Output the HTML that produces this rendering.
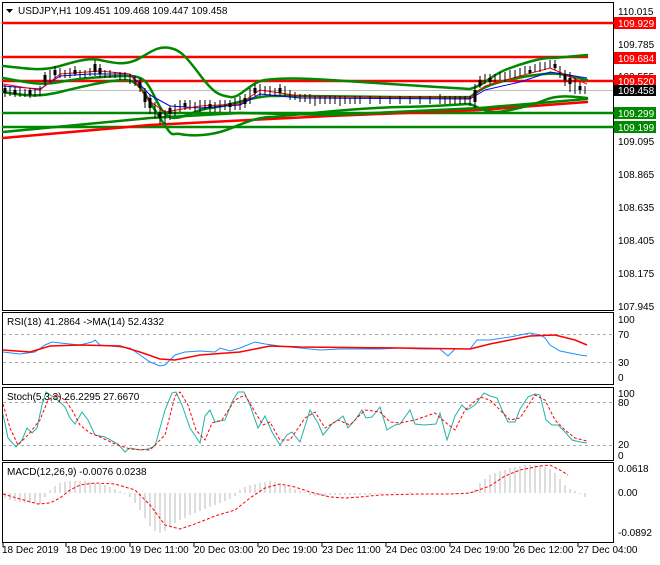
<!DOCTYPE html>
<html><head><style>
body{margin:0;background:#fff;width:660px;height:560px;overflow:hidden;font-family:"Liberation Sans",sans-serif}
svg text{font-family:"Liberation Sans",sans-serif;font-size:10px}
</style></head><body>
<svg width="660" height="560" viewBox="0 0 660 560" xmlns="http://www.w3.org/2000/svg">
<rect width="660" height="560" fill="#fff"/>
<g fill="none" stroke="#000" stroke-width="1">
<rect x="2.5" y="2.5" width="611" height="308"/>
<rect x="2.5" y="312.5" width="611" height="72"/>
<rect x="2.5" y="387.5" width="611" height="73"/>
<rect x="2.5" y="462.5" width="611" height="80"/>
</g>
<line x1="3" y1="90.5" x2="613" y2="90.5" stroke="#c0c0c0"/>
<g stroke-width="2.5" fill="none" stroke-linejoin="round" stroke-linecap="round">
<line x1="3" y1="23" x2="613" y2="23" stroke="#f00"/>
<line x1="3" y1="57" x2="587" y2="57" stroke="#f00"/>
<line x1="3" y1="81" x2="613" y2="81" stroke="#f00"/>
<line x1="3" y1="113" x2="613" y2="113" stroke="#080"/>
<line x1="3" y1="127" x2="613" y2="127" stroke="#080"/>
<polyline stroke="#f00" points="3,138 150,125 330,116 480,110 587,102"/>
<polyline stroke="#080" points="3,132 150,118 240,113 330,115 480,108 587,99"/>
<path stroke="#080" d="M3,66 C25,68 40,72 60,66 S90,58 100,60 S125,67 140,58 S160,46 170,48 S185,55 200,75 S220,95 230,97 S250,82 265,80 S300,78 330,80 S420,86 470,89 C485,85 490,76 505,70 S540,58 550,58 S575,56 587,55"/>
<path stroke="#080" d="M3,92 C25,96 40,97 60,92 S110,80 125,80 S145,95 160,118 S170,132 180,134 S205,136 220,132 S250,118 270,117 S350,108 400,107 S460,104 470,104 C480,108 485,112 495,112 S530,106 545,100 S575,97 587,98"/>
<path stroke="#080" d="M3,78 C25,82 40,86 60,82 S110,76 130,76 S150,92 162,110 S190,110 210,108 S250,97 270,96 S400,98 470,97 C480,90 485,86 500,82 S545,72 560,74 S580,79 587,80"/>
</g>
<polyline fill="none" stroke="#00f" stroke-linejoin="round" points="3,86 40,89 60,76 90,74 130,74 150,95 170,106 200,108 240,105 260,94 300,98 470,99 485,90 520,82 550,72 587,78"/>
<polyline fill="none" stroke="#f00" stroke-linejoin="round" points="3,84 40,90 60,74 100,71 130,74 148,100 165,112 200,106 240,104 260,90 300,96 470,98 485,86 520,76 550,68 587,84"/>
<g stroke="#000" stroke-width="1">
<path d="M5,85v12M10,86v10M15,87v10M20,88v9M25,89v8M30,88v10M35,89v8M40,86v10M45,72v14M50,70v12M55,66v12M60,68v10M65,70v8M70,68v10M75,66v10M80,70v8M85,70v8M90,68v8M95,60v16M100,64v14M105,70v8M110,70v8M115,72v6M120,72v8M125,72v8M130,74v10M135,76v10M140,78v14M145,88v20M150,94v20M155,102v16M160,108v16M165,110v14M170,106v14M175,104v12M180,100v12M185,100v10M190,100v10M195,102v10M200,100v12M205,100v10M210,100v12M215,102v10M220,100v12M225,100v10M230,100v12M235,98v12M240,96v14M245,94v14M250,88v16M255,84v12M260,84v12M265,86v8M270,86v10M275,88v8M280,84v12M285,86v10M290,90v10M295,92v8M300,94v8M305,94v8M310,94v10M315,96v10M320,96v8M325,96v8M330,96v8M335,96v8M340,96v10M345,96v8M350,98v6M355,96v8M360,96v8M370,96v8M380,96v8M390,96v8M400,96v8M410,96v8M420,96v8M430,96v8M440,94v10M445,96v8M450,96v8M455,96v8M460,96v8M465,96v8M470,96v10M475,84v24M480,76v12M485,74v10M490,74v10M495,74v8M500,72v8M505,72v10M510,70v8M515,70v8M520,68v8M525,66v8M530,66v8M535,64v8M540,62v10M545,62v8M550,60v8M555,60v10M560,66v12M565,70v16M570,72v20M575,78v16M580,82v12M585,86v8"/>
</g>
<g stroke="#000" stroke-width="3">
<path d="M5,88v5M15,90v4M30,90v5M45,75v7M55,70v5M75,70v4M95,64v8M100,68v6M140,82v6M145,92v10M150,98v10M160,112v6M170,108v6M185,103v4M210,104v4M230,103v4M245,98v6M255,88v5M280,88v5M475,90v12M480,80v6M490,78v4M530,70v3M555,64v4M565,74v6M570,78v6M580,86v4"/>
</g>
<g font-size="10" fill="#000">
<text x="618" y="15">110.015</text>
<text x="618" y="48">109.785</text>
<text x="618" y="80">109.555</text>
<text x="618" y="145">109.095</text>
<text x="618" y="178">108.865</text>
<text x="618" y="211">108.635</text>
<text x="618" y="244">108.405</text>
<text x="618" y="277">108.175</text>
<text x="618" y="310">107.945</text>
</g>
<rect x="614" y="17" width="42" height="12" fill="#f00"/><text x="618" y="27" fill="#fff">109.929</text>
<rect x="614" y="52" width="42" height="12" fill="#f00"/><text x="618" y="62" fill="#fff">109.684</text>
<rect x="614" y="75" width="42" height="12" fill="#f00"/><text x="618" y="85" fill="#fff">109.520</text>
<rect x="614" y="85" width="42" height="11" fill="#000"/><text x="618" y="94" fill="#fff">109.458</text>
<rect x="614" y="107" width="42" height="12" fill="#080"/><text x="618" y="117" fill="#fff">109.299</text>
<rect x="614" y="121" width="42" height="12" fill="#080"/><text x="618" y="131" fill="#fff">109.199</text>
<path d="M6,9h7l-3.5,4z" fill="#000"/>
<text x="18" y="14" fill="#000">USDJPY,H1  109.451 109.468 109.447 109.458</text>
<g stroke="#aaa" stroke-dasharray="3,3"><line x1="3" y1="334.5" x2="613" y2="334.5"/><line x1="3" y1="362.5" x2="613" y2="362.5"/></g>
<polyline fill="none" stroke="#1e90ff" points="3,352 20,354 35,352 45,345 52,342 60,343 80,345 92,342 95,340 100,345 130,348 140,355 150,362 160,366 165,365 175,355 185,352 200,351 215,352 220,348 230,351 240,348 255,342 265,344 280,346 300,348 320,350 340,349 360,349 380,349 400,348 420,349 440,349 448,356 455,349 470,349 477,340 490,340 510,337 525,334 530,333 540,335 545,338 550,345 560,351 570,353 580,355 587,356"/>
<polyline fill="none" stroke="#f00" stroke-width="1.5" points="3,350 30,352 50,346 80,345 120,346 140,352 160,359 175,360 200,355 240,352 270,346 300,347 400,348 470,349 490,344 530,336 555,335 575,340 587,345"/>
<g font-size="9.5"><text x="618" y="323">100</text><text x="618" y="338">70</text><text x="618" y="366">30</text><text x="618" y="381">0</text></g>
<text x="7" y="325">RSI(18) 41.2864  -&gt;MA(14) 52.4332</text>
<g stroke="#aaa" stroke-dasharray="3,3"><line x1="3" y1="402.5" x2="613" y2="402.5"/><line x1="3" y1="445.5" x2="613" y2="445.5"/></g>
<polyline fill="none" stroke="#20b2aa" points="3,414 8,438 16,447 22,440 27,428 32,433 37,428 42,405 46,392 50,395 55,398 60,402 65,407 70,418 75,424 82,412 88,420 95,435 105,437 118,444 125,452 130,448 140,450 148,449 155,446 165,410 172,393 176,392 182,405 190,428 200,443 205,416 210,410 215,422 225,420 233,400 238,392 244,392 250,405 258,428 265,416 272,432 280,445 287,435 292,432 300,442 310,410 318,423 323,435 332,424 338,420 343,416 348,428 355,420 362,410 366,418 372,417 380,407 387,430 395,425 400,424 410,410 415,424 424,425 436,424 440,413 447,440 455,416 462,405 467,410 475,405 484,393 490,396 497,398 502,410 508,422 515,422 520,409 528,397 535,394 540,395 546,420 552,425 558,425 566,433 572,440 580,442 587,443"/>
<polyline fill="none" stroke="#f00" stroke-dasharray="3,2" points="3,404 10,428 18,445 28,435 40,420 48,400 56,395 65,400 72,410 80,425 90,433 100,437 115,444 130,449 150,450 165,435 175,396 180,392 188,405 196,430 205,440 212,423 222,420 235,400 245,395 255,412 263,425 270,422 280,440 290,440 305,418 315,412 325,428 338,420 350,425 365,410 380,412 390,422 400,423 415,420 435,413 445,422 455,430 465,410 480,397 490,400 500,410 510,420 520,418 535,395 545,400 555,420 565,430 575,438 587,441"/>
<g font-size="9.5"><text x="618" y="397">100</text><text x="618" y="406">80</text><text x="618" y="448">20</text><text x="618" y="459">0</text></g>
<text x="7" y="400">Stoch(5,3,3) 26.2295 27.6670</text>
<path stroke="#bbb" stroke-width="1" d="M5,493v5M10,493v7M15,493v8M20,493v9M25,493v10M30,493v10M35,493v10M40,493v11M45,493v4M50,493v-3M55,493v-7M60,493v-10M65,493v-11M70,493v-12M75,493v-12M80,493v-12M85,493v-12M90,493v-11M95,493v-10M100,493v-9M105,493v-8M110,493v-6M115,493v-4M120,493v-2M125,493v1M130,493v4M135,493v10M140,493v17M145,493v25M150,493v33M155,493v38M160,493v40M165,493v38M170,493v34M175,493v30M180,493v27M185,493v25M190,493v22M195,493v20M200,493v18M205,493v16M210,493v14M215,493v12M220,493v10M225,493v8M230,493v6M235,493v3M240,493v-3M245,493v-6M250,493v-8M255,493v-9M260,493v-10M265,493v-11M270,493v-12M275,493v-11M280,493v-9M285,493v-7M290,493v-5M295,493v-4M300,493v-2M305,493v-1M310,493v2M315,493v3M320,493v3M325,493v3M330,493v2M335,493v2M340,493v2M345,493v2M350,493v2M355,493v2M360,493v2M365,493v2M370,493v2M375,493v1M380,493v1M395,493v-1M410,493v-1M455,493v1M470,493v-1M475,493v-4M480,493v-10M485,493v-14M490,493v-18M495,493v-20M500,493v-22M505,493v-23M510,493v-25M515,493v-26M520,493v-27M525,493v-28M530,493v-28M535,493v-28M540,493v-28M545,493v-26M550,493v-24M555,493v-20M560,493v-14M565,493v-8M570,493v-4M575,493v-2M580,493v1M585,493v4"/>
<polyline fill="none" stroke="#f00" stroke-dasharray="3,2" points="3,494 20,499 38,504 50,503 60,498 70,490 80,485 95,483 115,484 135,490 150,505 165,525 180,529 195,524 215,516 235,510 250,498 265,488 280,484 295,487 310,492 330,497 345,498 360,497 380,495 420,494 450,494 470,493 490,486 505,476 520,470 540,466 550,465 560,470 568,475"/>
<g font-size="9.5"><text x="618" y="472">0.0618</text><text x="618" y="496">0.00</text><text x="618" y="536">-0.0892</text></g>
<text x="7" y="475">MACD(12,26,9) -0.0076 0.0238</text>
<g stroke="#000"><path d="M3,543v4M66,543v4M130,543v4M194,543v4M258,543v4M322,543v4M386,543v4M450,543v4M514,543v4M578,543v4"/></g>
<g font-size="9.5">
<text x="2" y="553">18 Dec 2019</text><text x="66" y="553">18 Dec 19:00</text><text x="130" y="553">19 Dec 11:00</text><text x="194" y="553">20 Dec 03:00</text><text x="258" y="553">20 Dec 19:00</text><text x="322" y="553">23 Dec 11:00</text><text x="386" y="553">24 Dec 03:00</text><text x="450" y="553">24 Dec 19:00</text><text x="514" y="553">26 Dec 12:00</text><text x="578" y="553">27 Dec 04:00</text>
</g>
</svg>
</body></html>
